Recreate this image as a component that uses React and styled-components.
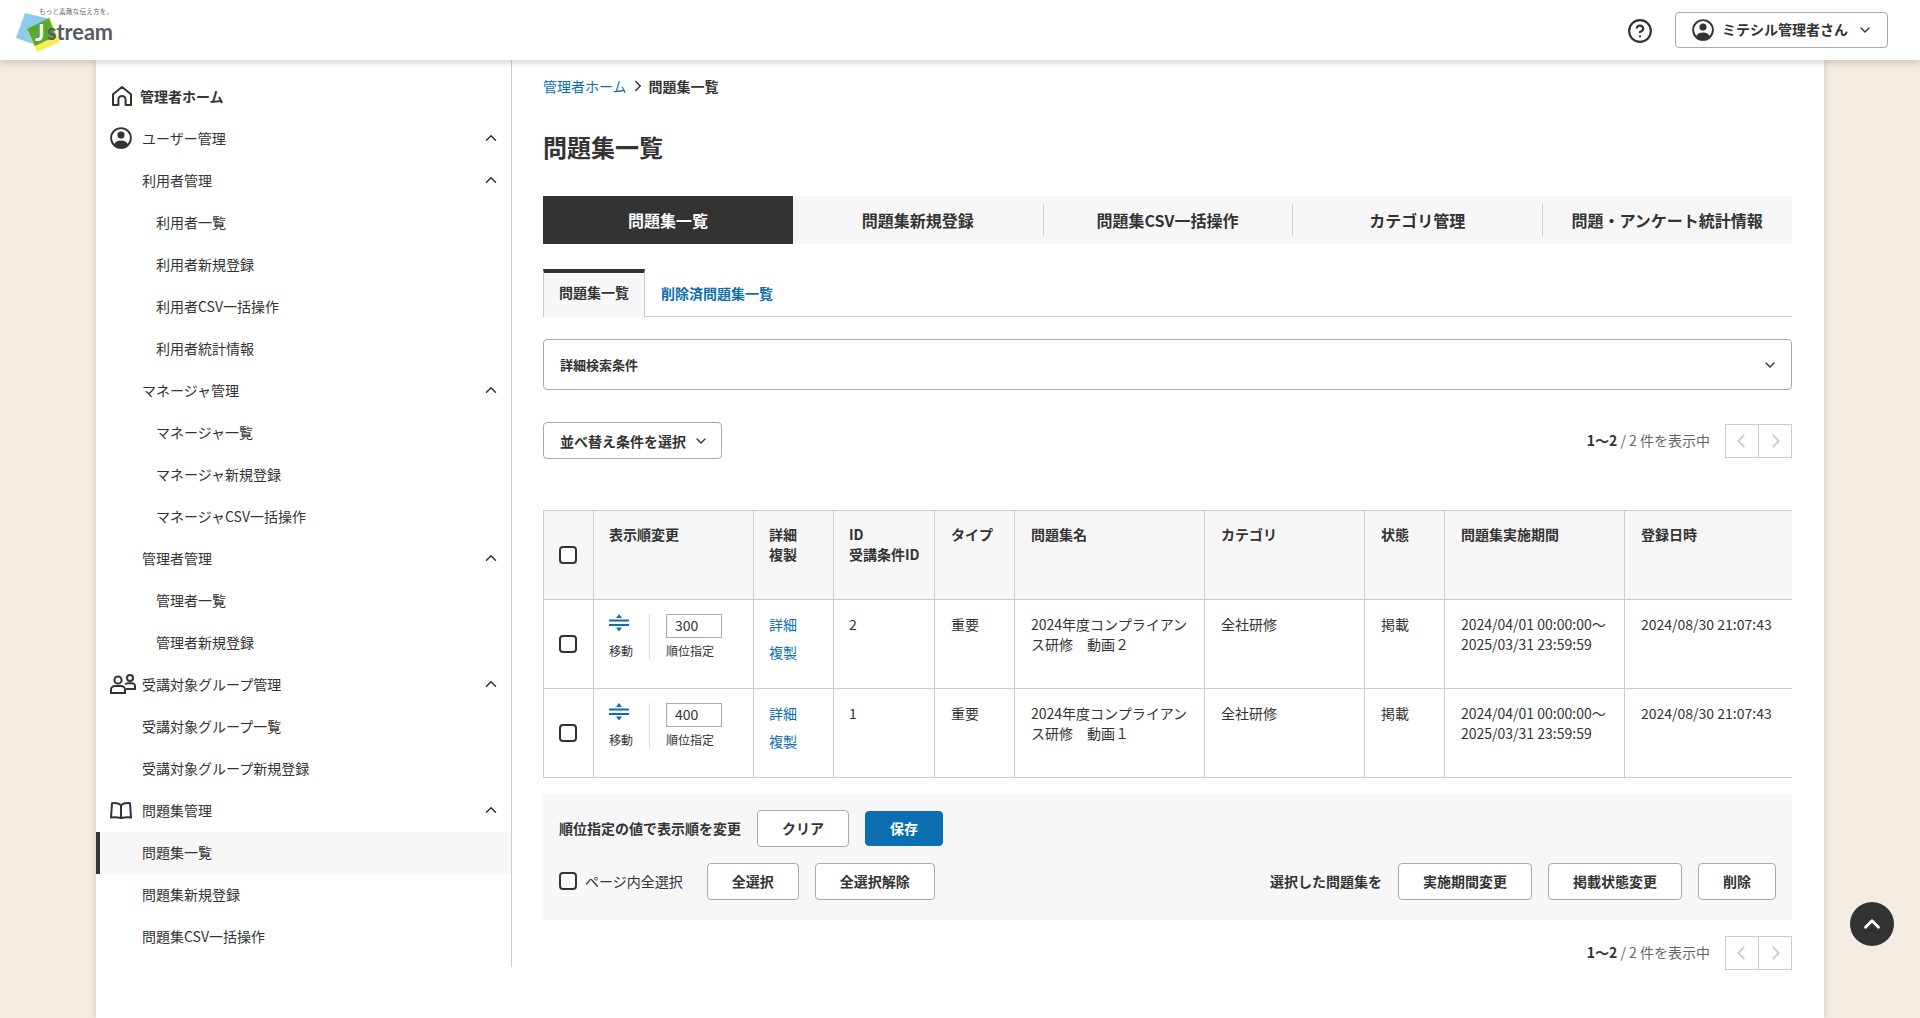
import styled, { createGlobalStyle } from "styled-components";
import {
  ChevronDown,
  ChevronLeft,
  ChevronRight,
  ChevronUp,
  CircleHelp,
} from "lucide-react";

const GlobalStyle = createGlobalStyle`
  * {
    box-sizing: border-box;
  }
  body {
    margin: 0;
    background: #f3ece1;
    color: #333;
    font-family: "Noto Sans CJK JP", "Noto Sans", sans-serif;
    font-size: 14px;
    line-height: 20px;
  }
`;

const StyledHeader = styled.header`
  position: relative;
  z-index: 2;
  display: flex;
  align-items: center;
  height: 60px;
  padding: 0 32px 0 16px;
  background: #fff;
  box-shadow: 0 2px 8px rgba(0, 0, 0, 0.2);
`;

const HelpButton = styled.div`
  display: flex;
  margin-left: auto;
  margin-right: 22px;
  margin-top: 2px;
`;

const UserButton = styled.div`
  display: flex;
  align-items: center;
  width: 213px;
  height: 36px;
  padding-left: 16px;
  border: 1px solid #aaa;
  border-radius: 4px;
  font-weight: 700;
  svg:last-child {
    margin-left: 9px;
  }
`;

const UserName = styled.span`
  margin-left: 8px;
  padding-bottom: 2px;
`;

const Wrap = styled.div`
  display: flex;
  align-items: flex-start;
  width: 1728px;
  min-height: calc(100vh - 60px);
  margin: 0 auto;
  background: #fff;
  box-shadow: 0 0 6px rgba(0, 0, 0, 0.18);
`;

const Sidebar = styled.nav`
  flex: none;
  width: 416px;
  padding: 16px 0 9px;
  border-right: 1px solid #ccc;
`;

const NavItem = styled.div`
  display: flex;
  align-items: center;
  height: 42px;
  padding-left: ${(p) => p.$pad}px;
  padding-right: 11px;
  padding-bottom: 2px;
  font-weight: ${(p) => (p.$bold ? 700 : 400)};
  background: ${(p) => (p.$active ? "#f7f7f7" : "transparent")};
  border-left: ${(p) => (p.$active ? "4px solid #333" : "0")};
`;

const NavIcon = styled.span`
  display: flex;
  flex: none;
  width: ${(p) => p.$w}px;
`;

const NavArrow = styled(ChevronUp)`
  margin-left: auto;
`;

const Main = styled.main`
  flex: 1;
  min-width: 0;
  padding: 16px 32px 0 31px;
`;

const Breadcrumb = styled.div`
  display: flex;
  align-items: center;
  gap: 2px;
  font-weight: 700;
`;

const CrumbLink = styled.a`
  color: #0b6fae;
  font-weight: 400;
`;

const Title = styled.h1`
  margin: 33px 0 31px;
  font-size: 24px;
  line-height: 36px;
  font-weight: 700;
`;

const MainTabs = styled.div`
  display: grid;
  grid-template-columns: repeat(5, 1fr);
  height: 48px;
  background: #f7f7f7;
`;

const MainTab = styled.div`
  position: relative;
  display: flex;
  align-items: center;
  justify-content: center;
  font-size: 16px;
  font-weight: 700;
  background: ${(p) => (p.$active ? "#333" : "transparent")};
  color: ${(p) => (p.$active ? "#fff" : "#333")};
  &::before {
    content: "";
    display: ${(p) => (p.$line ? "block" : "none")};
    position: absolute;
    left: 0;
    top: 8px;
    bottom: 8px;
    width: 1px;
    background: #ccc;
  }
`;

const SubTabs = styled.div`
  display: flex;
  height: 48px;
  margin: 25px 0 22px;
  border-bottom: 1px solid #ccc;
`;

const SubTabActive = styled.div`
  display: flex;
  align-items: center;
  width: 102px;
  height: 48px;
  padding: 0 0 6px 15px;
  border: 1px solid #ccc;
  border-top: 4px solid #333;
  border-bottom: 0;
  background: #f7f7f7;
  font-weight: 700;
  white-space: nowrap;
`;

const SubTabLink = styled.a`
  display: flex;
  align-items: center;
  padding: 0 16px;
  color: #0b6fae;
  font-weight: 700;
`;

const SearchBox = styled.div`
  display: flex;
  align-items: center;
  justify-content: space-between;
  height: 51px;
  padding: 0 13px 0 16px;
  border: 1px solid #aaa;
  border-radius: 4px;
  font-size: 13px;
  font-weight: 700;
`;

const SortRow = styled.div`
  display: flex;
  align-items: center;
  justify-content: space-between;
  margin: 32px 0 51px;
`;

const SortButton = styled.div`
  display: flex;
  align-items: center;
  gap: 7px;
  width: 179px;
  height: 37px;
  padding-left: 16px;
  border: 1px solid #aaa;
  border-radius: 4px;
  font-weight: 700;
`;

const PagerWrap = styled.div`
  display: flex;
  align-items: center;
  justify-content: flex-end;
  gap: 16px;
  color: #666;
`;

const PagerText = styled.span`
  padding-bottom: 2px;
`;

const PagerCount = styled.b`
  color: #333;
`;

const PagerButtons = styled.div`
  display: flex;
`;

const PagerButton = styled.div`
  display: flex;
  align-items: center;
  justify-content: center;
  width: 34px;
  height: 34px;
  margin-left: -1px;
  padding: ${(p) => (p.$next ? "0 0 0 2px" : "0 3px 0 0")};
  border: 1px solid #ccc;
  color: #ccc;
`;

const TableWrap = styled.div`
  overflow: hidden;
`;

const Table = styled.table`
  table-layout: fixed;
  width: 1303px;
  border-collapse: separate;
  border-spacing: 0;
`;

const Th = styled.th`
  height: 90px;
  padding: 13px 8px 0 16px;
  border-top: 1px solid #ccc;
  border-right: 1px solid #ccc;
  border-bottom: 1px solid #ccc;
  background: #f7f7f7;
  font-weight: 700;
  text-align: left;
  vertical-align: top;
  white-space: pre;
  &:nth-child(-n + 4) {
    padding-left: 15px;
  }
  &:first-child {
    padding: 0 0 0 15px;
    border-left: 1px solid #ccc;
    vertical-align: middle;
  }
`;

const Td = styled.td`
  height: 89px;
  padding: 14px 15px 0 16px;
  border-right: 1px solid #ccc;
  border-bottom: 1px solid #ccc;
  vertical-align: top;
  &:nth-child(-n + 4) {
    padding-left: 15px;
  }
  &:first-child {
    padding: 0 0 0 15px;
    border-left: 1px solid #ccc;
    vertical-align: middle;
  }
`;

const Check = styled.input.attrs({ type: "checkbox" })`
  display: block;
  appearance: none;
  width: 18px;
  height: 18px;
  margin: 0;
  background: #fff;
  border: 2px solid #333;
  border-radius: 4px;
`;

const OrderCell = styled.div`
  display: flex;
`;

const MoveBlock = styled.div`
  display: flex;
  flex-direction: column;
  width: 41px;
  height: 45px;
  border-right: 1px solid #ddd;
`;

const RankBlock = styled.div`
  display: flex;
  flex-direction: column;
  margin-left: 16px;
`;

const SmallLabel = styled.span`
  font-size: 12px;
  line-height: 16px;
  margin-top: auto;
`;

const MoveSlot = styled.span`
  display: flex;
  height: 24px;
`;

const RankInput = styled.input`
  width: 56px;
  height: 24px;
  padding: 0 8px 2px;
  border: 1px solid #aaa;
  border-radius: 0;
  color: #333;
  font: inherit;
  margin-bottom: 5px;
`;

const CellLink = styled.a`
  display: block;
  color: #0b6fae;
  & + & {
    margin-top: 8px;
  }
`;

const ActionPanel = styled.div`
  display: flex;
  flex-direction: column;
  gap: 16px;
  margin-top: 16px;
  padding: 16px 16px 20px;
  background: #f7f7f7;
`;

const ActionRow = styled.div`
  display: flex;
  align-items: center;
  gap: ${(p) => p.$gap || 16}px;
`;

const ActionLabel = styled.b`
  font-weight: 700;
  padding-bottom: 2px;
`;

const CheckLabel = styled.label`
  display: flex;
  align-items: center;
  gap: 8px;
  padding-bottom: 2px;
`;

const ActionGroup = styled.div`
  display: flex;
  align-items: center;
  gap: 16px;
  margin-left: ${(p) => (p.$right ? "auto" : "0")};
`;

const Button = styled.button`
  height: ${(p) => (p.$primary ? 35 : 37)}px;
  padding: 0 24px 2px;
  border: 1px solid ${(p) => (p.$primary ? "#0a6eb0" : "#aaa")};
  border-radius: 4px;
  background: ${(p) => (p.$primary ? "#0a6eb0" : "#fff")};
  color: ${(p) => (p.$primary ? "#fff" : "#333")};
  font: inherit;
  font-weight: 700;
`;

const BottomPager = styled(PagerWrap)`
  margin-top: 16px;
`;

const ScrollTop = styled.div`
  position: fixed;
  right: 26px;
  bottom: 72px;
  display: flex;
  align-items: center;
  justify-content: center;
  width: 44px;
  height: 44px;
  border-radius: 50%;
  background: #333;
  color: #fff;
`;

function Logo() {
  return (
    <svg width="106" height="46" viewBox="16 7 106 46">
      <polygon points="25,13 16,38 39,46 50,19" fill="#8ccbeb" />
      <polygon points="50,18 60,42 37,52 27,30" fill="#f7ee55" />
      <polygon points="49,18 56,36 35,46 27,29" fill="#5aa82f" />
      <text
        x="35"
        y="41"
        fontFamily="Lato, sans-serif"
        fontWeight="700"
        fontSize="22"
        fill="#fff"
      >
        J
      </text>
      <text
        x="47"
        y="40"
        textLength="66"
        lengthAdjust="spacingAndGlyphs"
        fontFamily="Lato, sans-serif"
        fontWeight="700"
        fontSize="23"
        fill="#555a66"
      >
        stream
      </text>
      <text
        x="39"
        y="14"
        textLength="74"
        fontFamily="Noto Sans CJK JP, sans-serif"
        fontSize="6.5"
        fill="#666"
      >
        もっと素敵な伝え方を。
      </text>
    </svg>
  );
}

function UserIcon({ size = 22 }) {
  return (
    <svg width={size} height={size} viewBox="0 0 24 24">
      <circle cx="12" cy="12" r="10.8" fill="none" stroke="#333" strokeWidth="2" />
      <circle cx="12" cy="8.8" r="3.9" fill="#333" />
      <path d="M4 19.6C5.4 16.2 8.4 14.6 12 14.6s6.6 1.6 8 5A11 11 0 0 1 4 19.6z" fill="#333" />
    </svg>
  );
}

function HomeIcon() {
  return (
    <svg width="20" height="20" viewBox="0 0 20 20" fill="none" stroke="#333" strokeWidth="2">
      <path d="M1 19V8.2L10 1l9 7.2V19h-5.4v-5.5a3.6 3.6 0 0 0-7.2 0V19z" strokeLinejoin="round" />
    </svg>
  );
}

function GroupIcon() {
  return (
    <svg width="26" height="20" viewBox="0 0 26 20" fill="none" stroke="#333" strokeWidth="2">
      <circle cx="8" cy="6" r="3.6" />
      <circle cx="20" cy="4" r="3" />
      <path d="M1 19v-3.5C1 13.5 3 12 5 12h6c2 0 4 1.5 4 3.5V19z" />
      <path d="M16 15h9v-3c0-1.5-1.5-2.8-3-2.8h-4c-1.2 0-2.2.6-2.6 1.4" />
    </svg>
  );
}

function BookIcon() {
  return (
    <svg width="22" height="17" viewBox="0 0 22 17" fill="none" stroke="#333" strokeWidth="2">
      <path d="M11 3.2C9 1.4 5 .8 2 1.2L1 15.6c3.5-.5 7.5-.2 10 .6 2.5-.8 6.5-1.1 10-.6L20 1.2C17 .8 13 1.4 11 3.2z" strokeLinejoin="round" />
      <path d="M11 3.2v13" />
    </svg>
  );
}

function MoveIcon() {
  return (
    <svg width="20" height="18" viewBox="0 0 20 18" fill="#0a6eb0">
      <polygon points="10,0 13,4 7,4" />
      <rect x="0" y="5.5" width="20" height="2" />
      <rect x="0" y="10" width="20" height="2" />
      <polygon points="7,13.5 13,13.5 10,17.5" />
    </svg>
  );
}

const navItems = [
  { label: "管理者ホーム", pad: 16, icon: <HomeIcon />, slot: 28, bold: true },
  { label: "ユーザー管理", pad: 14, icon: <UserIcon />, slot: 32, arrow: true },
  { label: "利用者管理", pad: 46, arrow: true },
  { label: "利用者一覧", pad: 60 },
  { label: "利用者新規登録", pad: 60 },
  { label: "利用者CSV一括操作", pad: 60 },
  { label: "利用者統計情報", pad: 60 },
  { label: "マネージャ管理", pad: 46, arrow: true },
  { label: "マネージャ一覧", pad: 60 },
  { label: "マネージャ新規登録", pad: 60 },
  { label: "マネージャCSV一括操作", pad: 60 },
  { label: "管理者管理", pad: 46, arrow: true },
  { label: "管理者一覧", pad: 60 },
  { label: "管理者新規登録", pad: 60 },
  { label: "受講対象グループ管理", pad: 14, icon: <GroupIcon />, slot: 32, arrow: true },
  { label: "受講対象グループ一覧", pad: 46 },
  { label: "受講対象グループ新規登録", pad: 46 },
  { label: "問題集管理", pad: 14, icon: <BookIcon />, slot: 32, arrow: true },
  { label: "問題集一覧", pad: 42, active: true },
  { label: "問題集新規登録", pad: 46 },
  { label: "問題集CSV一括操作", pad: 46 },
];

const mainTabs = [
  "問題集一覧",
  "問題集新規登録",
  "問題集CSV一括操作",
  "カテゴリ管理",
  "問題・アンケート統計情報",
];

const columns = [
  { title: "", width: 51 },
  { title: "表示順変更", width: 160 },
  { title: "詳細\n複製", width: 80 },
  { title: "ID\n受講条件ID", width: 101 },
  { title: "タイプ", width: 80 },
  { title: "問題集名", width: 190 },
  { title: "カテゴリ", width: 160 },
  { title: "状態", width: 80 },
  { title: "問題集実施期間", width: 180 },
  { title: "登録日時", width: 221 },
];

const rows = [
  { id: 2, order: "300", name: "2024年度コンプライアンス研修　動画２" },
  { id: 1, order: "400", name: "2024年度コンプライアンス研修　動画１" },
];

function Pager() {
  return (
    <>
      <PagerText>
        <PagerCount>1〜2</PagerCount> / 2 件を表示中
      </PagerText>
      <PagerButtons>
        <PagerButton>
          <ChevronLeft size={22} strokeWidth={2} />
        </PagerButton>
        <PagerButton $next>
          <ChevronRight size={22} strokeWidth={2} />
        </PagerButton>
      </PagerButtons>
    </>
  );
}

function App() {
  return (
    <>
      <GlobalStyle />
      <StyledHeader>
        <Logo />
        <HelpButton>
          <CircleHelp size={26} strokeWidth={2} color="#333" />
        </HelpButton>
        <UserButton>
          <UserIcon />
          <UserName>ミテシル管理者さん</UserName>
          <ChevronDown size={16} strokeWidth={2} />
        </UserButton>
      </StyledHeader>
      <Wrap>
        <Sidebar>
          {navItems.map((item) => (
            <NavItem
              key={item.label}
              $pad={item.pad}
              $bold={item.bold}
              $active={item.active}
            >
              {item.icon && <NavIcon $w={item.slot}>{item.icon}</NavIcon>}
              {item.label}
              {item.arrow && <NavArrow size={18} strokeWidth={2} />}
            </NavItem>
          ))}
        </Sidebar>
        <Main>
          <Breadcrumb>
            <CrumbLink>管理者ホーム</CrumbLink>
            <ChevronRight size={18} strokeWidth={2} />
            問題集一覧
          </Breadcrumb>
          <Title>問題集一覧</Title>
          <MainTabs>
            {mainTabs.map((tab, i) => (
              <MainTab key={tab} $active={i === 0} $line={i > 1}>
                {tab}
              </MainTab>
            ))}
          </MainTabs>
          <SubTabs>
            <SubTabActive>問題集一覧</SubTabActive>
            <SubTabLink>削除済問題集一覧</SubTabLink>
          </SubTabs>
          <SearchBox>
            詳細検索条件
            <ChevronDown size={16} strokeWidth={2} />
          </SearchBox>
          <SortRow>
            <SortButton>
              並べ替え条件を選択
              <ChevronDown size={16} strokeWidth={2} />
            </SortButton>
            <PagerWrap>
              <Pager />
            </PagerWrap>
          </SortRow>
          <TableWrap>
            <Table>
              <colgroup>
                {columns.map((col, i) => (
                  <col key={i} style={{ width: col.width }} />
                ))}
              </colgroup>
              <thead>
                <tr>
                  {columns.map((col, i) => (
                    <Th key={i}>{i === 0 ? <Check /> : col.title}</Th>
                  ))}
                </tr>
              </thead>
              <tbody>
                {rows.map((row) => (
                  <tr key={row.id}>
                    <Td>
                      <Check />
                    </Td>
                    <Td>
                      <OrderCell>
                        <MoveBlock>
                          <MoveSlot>
                            <MoveIcon />
                          </MoveSlot>
                          <SmallLabel>移動</SmallLabel>
                        </MoveBlock>
                        <RankBlock>
                          <RankInput defaultValue={row.order} />
                          <SmallLabel>順位指定</SmallLabel>
                        </RankBlock>
                      </OrderCell>
                    </Td>
                    <Td>
                      <CellLink>詳細</CellLink>
                      <CellLink>複製</CellLink>
                    </Td>
                    <Td>{row.id}</Td>
                    <Td>重要</Td>
                    <Td>{row.name}</Td>
                    <Td>全社研修</Td>
                    <Td>掲載</Td>
                    <Td>
                      2024/04/01 00:00:00〜
                      <br />
                      2025/03/31 23:59:59
                    </Td>
                    <Td>2024/08/30 21:07:43</Td>
                  </tr>
                ))}
              </tbody>
            </Table>
          </TableWrap>
          <ActionPanel>
            <ActionRow>
              <ActionLabel>順位指定の値で表示順を変更</ActionLabel>
              <Button>クリア</Button>
              <Button $primary>保存</Button>
            </ActionRow>
            <ActionRow $gap={24}>
              <CheckLabel>
                <Check />
                ページ内全選択
              </CheckLabel>
              <ActionGroup>
                <Button>全選択</Button>
                <Button>全選択解除</Button>
              </ActionGroup>
              <ActionGroup $right>
                <ActionLabel>選択した問題集を</ActionLabel>
                <Button>実施期間変更</Button>
                <Button>掲載状態変更</Button>
                <Button>削除</Button>
              </ActionGroup>
            </ActionRow>
          </ActionPanel>
          <BottomPager>
            <Pager />
          </BottomPager>
        </Main>
      </Wrap>
      <ScrollTop>
        <ChevronUp size={26} strokeWidth={2.6} />
      </ScrollTop>
    </>
  );
}

export default App;
